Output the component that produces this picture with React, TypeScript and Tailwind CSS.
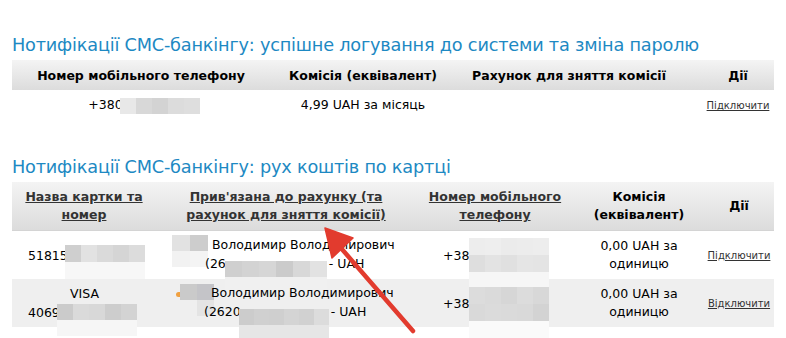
import React from 'react';

const font = { fontFamily: '"DejaVu Sans", Verdana, sans-serif' };

// redaction mosaic: rows of cell colours
const Mosaic = ({ rows, cell, className = '' }: { rows: string[][]; cell: string; className?: string }) => (
  <span className={`inline-flex flex-col shrink-0 ${className}`}>
    {rows.map((r, i) => (
      <span key={i} className="flex">
        {r.map((c, j) => (
          <span key={j} className={`${cell} ${c}`} />
        ))}
      </span>
    ))}
  </span>
);

const Arrow = () => (
  <svg className="absolute left-0 top-0 pointer-events-none" width="786" height="338">
    <line x1="413" y1="331" x2="334" y2="240" stroke="#e23b2e" strokeWidth="4.5" strokeLinecap="round" />
    <polygon points="325,228 353,238 332,258" fill="#e23b2e" stroke="#e23b2e" strokeWidth="1.5" strokeLinejoin="round" />
  </svg>
);

const App = () => {
  return (
    <div className="relative w-[786px] h-[338px] bg-white overflow-hidden text-black" style={font}>
      <div className="px-[12px] pt-[34px]">
        <h2 className="text-[17.7px] leading-[22px] text-[#1d89c3] font-normal tracking-[-0.2px] whitespace-nowrap">
          Нотифікації СМС-банкінгу: успішне логування до системи та зміна паролю
        </h2>
        <div className="mt-[4px]">
          <div className="grid grid-cols-[248px_206px_206px_102px] h-[30px] pt-[3px] items-center bg-gradient-to-b from-[#f4f4f4] to-[#dcdcdc] text-[12.5px] font-bold">
            <div className="text-center pl-[10px]">Номер мобільного телефону</div>
            <div className="text-center">Комісія (еквівалент)</div>
            <div className="text-center">Рахунок для зняття комісії</div>
            <div className="text-center pl-[30px]">Дії</div>
          </div>
          <div className="grid grid-cols-[248px_206px_206px_102px] h-[30px] pt-[1px] items-center text-[12.5px]">
            <div className="flex justify-center pl-[16px]">
              <span className="flex items-center">
                +380
                <Mosaic
                  className="ml-[-3px]"
                  cell="w-[16px] h-[16px]"
                  rows={[['bg-[#e8e8e8]', 'bg-[#d8d8d8]', 'bg-[#d3d3d3]', 'bg-[#dcdcdc]', 'bg-[#dedede]']]}
                />
              </span>
            </div>
            <div className="text-center">4,99 UAH за місяць</div>
            <div />
            <div className="text-center pl-[30px] text-[10px] text-[#333] underline">Підключити</div>
          </div>
        </div>

        <h2 className="mt-[36px] text-[17.7px] leading-[22px] text-[#1d89c3] font-normal tracking-[-0.2px]">
          Нотифікації СМС-банкінгу: рух коштів по картці
        </h2>
        <div className="mt-[4px]">
          <div className="grid grid-cols-[144px_260px_158px_130px_70px] h-[49px] items-center bg-gradient-to-b from-[#f4f4f4] to-[#dcdcdc] text-[12.5px] leading-[18px] font-bold text-[#333] border-b border-[#d4d4d4]">
            <div className="text-center underline">Назва картки та<br />номер</div>
            <div className="text-center underline">Прив'язана до рахунку (та<br />рахунок для зняття комісії)</div>
            <div className="text-center underline">Номер мобільного<br />телефону</div>
            <div className="text-center text-black">Комісія<br />(еквівалент)</div>
            <div className="text-center text-black">Дії</div>
          </div>

          <div className="grid grid-cols-[144px_260px_158px_130px_70px] h-[48px] text-[12.5px] leading-[19px]">
            <div className="flex h-[48px] items-center pl-[16px]">
              51815
              <Mosaic
                className="self-start mt-[14px] mb-[-100px] ml-[-3px]"
                cell="w-[16px] h-[17px]"
                rows={[
                  ['bg-[#cfcfcf]', 'bg-[#e2e2e2]', 'bg-[#dadada]', 'bg-[#d5d5d5]', 'bg-[#dcdcdc]'],
                  ['bg-[#f7f7f7]', 'bg-[#f7f7f7]', 'bg-[#f7f7f7]', 'bg-[#f7f7f7]', 'bg-[#f7f7f7]'],
                ]}
              />
            </div>
            <div className="flex h-[48px] items-center pl-[16px]">
              <Mosaic
                className="self-start mt-[4px] mb-[-100px]"
                cell="w-[18px] h-[16px]"
                rows={[
                  ['bg-[#e2e2e2]', 'bg-[#cdcdcd]'],
                  ['bg-[#f2f2f2]', 'bg-[#f4f4f4]'],
                ]}
              />
              <div className="flex flex-col ml-[-3px] mt-[-2px]">
                <span className="pl-[7px] whitespace-nowrap">Володимир Володимирович</span>
                <span className="flex items-center whitespace-nowrap">
                  (26
                  <Mosaic
                    className="self-start mt-[7px] mb-[-100px] ml-[-1px]"
                    cell="w-[17px] h-[16px]"
                    rows={[
                      ['bg-[#cfcfcf]', 'bg-[#d3d3d3]', 'bg-[#d6d6d6]', 'bg-[#cbcbcb]', 'bg-[#d8d8d8]', 'bg-[#e2e2e2]'],
                      ['bg-[#f0f0f0]', 'bg-[#f0f0f0]', 'bg-[#f0f0f0]', 'bg-[#f0f0f0]', 'bg-[#f0f0f0]', 'bg-[#f0f0f0]'],
                    ]}
                  />
                  <span className="ml-[2px]">- UAH</span>
                </span>
              </div>
            </div>
            <div className="flex h-[48px] items-center pl-[27px]">
              +38
              <Mosaic
                className="self-start mt-[7px] mb-[-100px]"
                cell="w-[16px] h-[17px]"
                rows={[
                  ['bg-[#ededed]', 'bg-[#eeeeee]', 'bg-[#ebebeb]', 'bg-[#ececec]', 'bg-[#ededed]'],
                  ['bg-[#dedede]', 'bg-[#e3e3e3]', 'bg-[#e0e0e0]', 'bg-[#e5e5e5]', 'bg-[#e4e4e4]'],
                  ['bg-[#f6f6f6]', 'bg-[#f6f6f6]', 'bg-[#f6f6f6]', 'bg-[#f6f6f6]', 'bg-[#f6f6f6]'],
                ]}
              />
            </div>
            <div className="flex h-[48px] items-center justify-center text-center leading-[18px]">0,00 UAH за<br />одиницю</div>
            <div className="flex h-[48px] items-center justify-center text-[10px] text-[#333] underline">Підключити</div>
          </div>

          <div className="grid grid-cols-[144px_260px_158px_130px_70px] h-[48px] text-[12.5px] leading-[19px] bg-[#efefef]">
            <div className="flex flex-col justify-center h-[48px] pl-[16px]">
              <span className="pl-[42px]">VISA</span>
              <span className="flex items-center">
                4069
                <Mosaic
                  className="self-start mt-[1px] mb-[-100px] ml-[-3px]"
                  cell="w-[16px] h-[16px]"
                  rows={[
                    ['bg-[#cbcbcb]', 'bg-[#dadada]', 'bg-[#d8d8d8]', 'bg-[#cdcdcd]', 'bg-[#d3d3d3]'],
                    ['bg-[#f6f6f6]', 'bg-[#f6f6f6]', 'bg-[#f6f6f6]', 'bg-[#f6f6f6]', 'bg-[#f6f6f6]'],
                  ]}
                />
              </span>
            </div>
            <div className="flex h-[48px] items-center pl-[20px]">
              <span className="self-start mt-[13px] mb-[-100px] w-[4px] h-[5px] rounded-l-full bg-[#f0a040] shrink-0" />
              <Mosaic
                className="self-start mt-[5px] mb-[-100px]"
                cell="w-[17px] h-[16px]"
                rows={[
                  ['bg-[#cacaca]', 'bg-[#c4c4c8]'],
                  ['bg-[#efefef]', 'bg-[#e4e4e4]'],
                ]}
              />
              <div className="flex flex-col ml-[-10px] mt-[-2px]">
                <span className="pl-[7px] whitespace-nowrap">Володимир Володимирович</span>
                <span className="flex items-center whitespace-nowrap">
                  (2620
                  <Mosaic
                    className="self-start mt-[7px] mb-[-100px] ml-[-2px]"
                    cell="w-[15px] h-[16px]"
                    rows={[
                      ['bg-[#cccccc]', 'bg-[#d0d0d0]', 'bg-[#cfcfcf]', 'bg-[#d4d4d4]', 'bg-[#d1d1d1]', 'bg-[#dcdcdc]'],
                      ['bg-[#e6e6e6]', 'bg-[#e6e6e6]', 'bg-[#e6e6e6]', 'bg-[#e6e6e6]', 'bg-[#e6e6e6]', 'bg-[#e6e6e6]'],
                    ]}
                  />
                  <span className="ml-[2px]">- UAH</span>
                </span>
              </div>
            </div>
            <div className="flex h-[48px] items-center pl-[27px]">
              +38
              <Mosaic
                className="self-start mt-[8px] mb-[-100px]"
                cell="w-[16px] h-[17px]"
                rows={[
                  ['bg-[#dcdcdc]', 'bg-[#dadada]', 'bg-[#d6d6d6]', 'bg-[#dcdcdc]', 'bg-[#d8d8d8]'],
                  ['bg-[#d9d9d9]', 'bg-[#dbdbdb]', 'bg-[#dadada]', 'bg-[#d9d9d9]', 'bg-[#d3d3d3]'],
                  ['bg-[#fafafa]', 'bg-[#fafafa]', 'bg-[#fafafa]', 'bg-[#fafafa]', 'bg-[#fafafa]'],
                ]}
              />
            </div>
            <div className="flex h-[48px] items-center justify-center text-center leading-[18px]">0,00 UAH за<br />одиницю</div>
            <div className="flex h-[48px] items-center justify-center text-[10px] text-[#333] underline">Відключити</div>
          </div>
        </div>
      </div>
      <Arrow />
    </div>
  );
};

export default App;
